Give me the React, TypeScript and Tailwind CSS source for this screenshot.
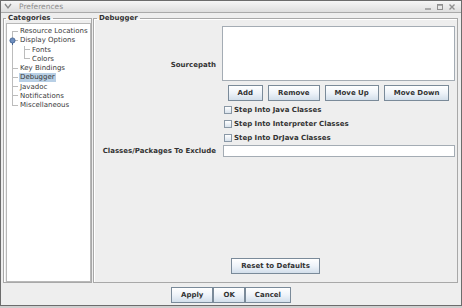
import type { ReactNode } from "react";

type BtnProps = { children: ReactNode; className?: string };

function Btn({ children, className = "" }: BtnProps) {
  return (
    <button
      className={`h-[16px] px-[9px] border border-[#7a8a99] bg-linear-to-b from-[#ffffff] via-[#eef3f9] to-[#d3dfeb] text-[7px] font-bold leading-none text-[#333333] whitespace-nowrap ${className}`}
    >
      {children}
    </button>
  );
}

function Check({ label }: { label: string }) {
  return (
    <div className="flex h-[14px] items-center pl-[2px]">
      <span className="h-[8px] w-[8px] border border-[#8a98a6] bg-linear-to-b from-[#ffffff] to-[#d8e2ec]" />
      <span className="ml-[2px] text-[7px] font-bold text-[#333333]">{label}</span>
    </div>
  );
}

type Item = { label: string; depth: 0 | 1; open?: boolean; selected?: boolean };

const items: Item[] = [
  { label: "Resource Locations", depth: 0 },
  { label: "Display Options", depth: 0, open: true },
  { label: "Fonts", depth: 1 },
  { label: "Colors", depth: 1 },
  { label: "Key Bindings", depth: 0 },
  { label: "Debugger", depth: 0, selected: true },
  { label: "Javadoc", depth: 0 },
  { label: "Notifications", depth: 0 },
  { label: "Miscellaneous", depth: 0 },
];

function Connector({ first, last }: { first: boolean; last: boolean }) {
  return (
    <div className="flex h-full w-[6px] flex-col">
      <div className={`h-1/2 border-b border-[#bcbcbc] ${first ? "" : "border-l"}`} />
      <div className={`h-1/2 border-[#bcbcbc] ${last ? "" : "border-l"}`} />
    </div>
  );
}

function Tree() {
  return (
    <div className="h-[259px] border border-[#b8b8b8] bg-white pt-[3px] pl-[5px]">
      {items.map((it, i) => {
        const rootLast = i === items.length - 1;
        const childLast = it.depth === 1 && items[i + 1]?.depth !== 1;
        return (
          <div key={it.label} className="flex h-[9.25px] items-center">
            {it.depth === 0 ? (
              <div className="relative h-full">
                <Connector first={i === 0} last={rootLast} />
                {it.open && (
                  <svg
                    className="absolute left-[-3px] top-[1px]"
                    width="7"
                    height="8"
                    viewBox="0 0 7 8"
                  >
                    <circle cx="3.5" cy="3.5" r="2.6" fill="#6f8fbf" stroke="#3f5f8f" strokeWidth="0.8" />
                    <line x1="3.5" y1="6" x2="3.5" y2="8" stroke="#3f5f8f" strokeWidth="1" />
                  </svg>
                )}
              </div>
            ) : (
              <>
                <div className="h-full w-[12px] border-l border-[#bcbcbc]" />
                <Connector first={false} last={childLast} />
              </>
            )}
            <span
              className={`ml-[1px] px-[1px] text-[7px] leading-[9px] text-[#3a3a3a] whitespace-nowrap ${
                it.selected ? "bg-[#b8cfe5]" : ""
              }`}
            >
              {it.label}
            </span>
          </div>
        );
      })}
    </div>
  );
}

export default function App() {
  return (
    <div className="h-[308px] w-[462px] bg-[#cfcfcf] font-['DejaVu_Sans',sans-serif]">
      <div className="flex h-[306px] flex-col border border-[#6c6c6c] bg-[#eeeeee]">
        {/* title bar */}
        <div className="flex h-[12px] items-center border-b border-[#a9a9a9] bg-linear-to-b from-[#f6f6f6] to-[#dedede] px-[2px]">
          <svg width="8" height="7" viewBox="0 0 8 7" className="ml-[1px]">
            <polyline points="1,1 4,5 7,1" fill="none" stroke="#8a8a8a" strokeWidth="1.3" />
          </svg>
          <span className="ml-[7px] text-[7.5px] leading-none text-[#8c8c8c]">Preferences</span>
          <div className="ml-auto flex items-center gap-[6px] pr-[4px]">
            <svg width="6" height="6" viewBox="0 0 6 6">
              <line x1="0" y1="5" x2="6" y2="5" stroke="#909090" strokeWidth="1.4" />
            </svg>
            <svg width="6" height="6" viewBox="0 0 6 6">
              <rect x="0.5" y="0.5" width="5" height="5" fill="none" stroke="#909090" strokeWidth="1" />
              <line x1="0" y1="1" x2="6" y2="1" stroke="#909090" strokeWidth="1.4" />
            </svg>
            <svg width="6" height="6" viewBox="0 0 6 6">
              <path d="M0.5 0.5 L5.5 5.5 M5.5 0.5 L0.5 5.5" stroke="#909090" strokeWidth="1.4" />
            </svg>
          </div>
        </div>

        <div className="flex flex-1 flex-col px-[2px] pt-[1px]">
          <div className="flex gap-[1px]">
            <fieldset className="h-[269px] w-[89px] border border-[#a8a8a8] pl-[2px] pr-[0px] shadow-[inset_1px_1px_0_#ffffff]">
              <legend className="px-[2px] text-[7px] font-bold leading-[9px] text-[#333333]">Categories</legend>
              <Tree />
            </fieldset>

            <fieldset className="h-[269px] w-[365px] border border-[#a8a8a8] shadow-[inset_1px_1px_0_#ffffff]">
              <legend className="ml-[3px] px-[2px] text-[7px] font-bold leading-[9px] text-[#333333]">Debugger</legend>
              <div className="flex h-[259px] flex-col">
                <div className="mt-[3px] grid grid-cols-[122px_1fr] gap-x-[6px] pr-[2px]">
                  <div className="self-center pt-[3px] text-right text-[7px] font-bold text-[#333333]">Sourcepath</div>
                  <div className="flex flex-col">
                    <div className="h-[55px] border border-[#a4acb4] bg-white" />
                    <div className="mt-[4px] flex justify-center gap-[5px]">
                      <Btn>Add</Btn>
                      <Btn>Remove</Btn>
                      <Btn>Move Up</Btn>
                      <Btn>Move Down</Btn>
                    </div>
                  </div>

                  <div className="col-start-2 mt-[2px] flex flex-col">
                    <Check label="Step Into Java Classes" />
                    <Check label="Step Into Interpreter Classes" />
                    <Check label="Step Into DrJava Classes" />
                  </div>

                  <div className="self-center text-right text-[7px] font-bold text-[#333333] whitespace-nowrap">
                    Classes/Packages To Exclude
                  </div>
                  <div className="ml-[1px] h-[12px] border border-[#a4acb4] bg-white" />
                </div>

                <div className="flex-1" />
                <div className="mb-[8px] flex justify-center">
                  <Btn className="px-[9.5px]">Reset to Defaults</Btn>
                </div>
              </div>
            </fieldset>
          </div>

          <div className="mt-[4px] flex justify-center">
            <Btn className="px-[9.5px]">Apply</Btn>
            <Btn className="px-[9.5px]">OK</Btn>
            <Btn className="px-[9.5px]">Cancel</Btn>
          </div>
        </div>
      </div>
    </div>
  );
}
